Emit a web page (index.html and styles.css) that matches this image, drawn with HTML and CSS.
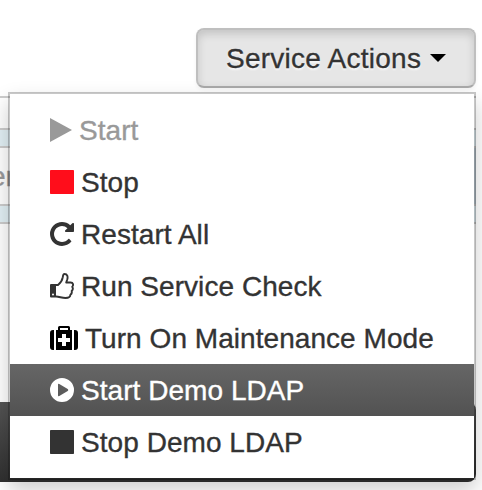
FILE: index.html
```html
<!DOCTYPE html>
<html lang="en">
<head>
<meta charset="utf-8">
<title>Service Actions</title>
<link rel="stylesheet" href="styles.css">
</head>
<body>
<header class="toolbar">
  <div class="dropdown">
    <button class="toggle" type="button"><span class="label">Service Actions</span><i class="caret"></i></button>
    <ul class="menu">
      <li class="item disabled"><svg class="icon play" viewBox="0 0 22 24"><path d="M0 0 22 12 0 24Z"/></svg><span>Start</span></li>
      <li class="item stop"><svg class="icon" viewBox="0 0 24 24"><rect width="24" height="24" rx=".7"/></svg><span>Stop</span></li>
      <li class="item"><svg class="icon" viewBox="0 128 1536 1536"><path d="M1536 256v448q0 26-19 45t-45 19h-448q-42 0-59-40-17-39 14-69l138-138q-148-137-349-137-104 0-198.500 40.500t-163.500 109.500-109.500 163.500-40.500 198.500 40.500 198.500 109.500 163.500 163.500 109.500 198.500 40.500q119 0 225-52t179-147q7-10 23-12 15 0 25 9l137 138q9 8 9.500 20.500t-7.500 22.500q-109 132-264 204.500t-327 72.500q-156 0-298-61t-245-164-164-245-61-298 61-298 164-245 245-164 298-61q147 0 284.500 55.500t244.500 156.500l130-129q29-31 70-14 39 17 39 59z"/></svg><span>Restart All</span></li>
      <li class="item"><svg class="icon thumb" viewBox="0 0 24 26"><path d="M1 11H6V24.500H1Q0 24.500 0 23.500V12Q0 11 1 11Z"/><circle cx="3" cy="21.500" r="1" fill="#fff"/><path d="M6 12H8C10.500 10 12.300 7.500 12.800 4.200 13 2 13.600 1 14.500 1 17.400 1 18 3.700 17.300 6.300L16.200 9.500H20.600C23.300 9.500 23.700 12.200 22.200 13.800 23.300 15.500 22.800 17 21.700 18 22.200 20 21.500 21 20.400 21.800 20.400 24.300 18.800 25 15.500 25 11.500 25 9.500 23.500 6 23.500" fill="none" stroke="currentColor" stroke-width="1.900" stroke-linejoin="round"/></svg><span>Run Service Check</span></li>
      <li class="item"><svg class="icon medkit" viewBox="0 0 28 24"><path d="M0 7Q0 4 3 4H4V24H3Q0 24 0 21ZM24 4H25Q28 4 28 7V21Q28 24 25 24H24ZM6 4H8V1.500Q8 0 9.500 0H18.500Q20 0 20 1.500V4H22V24H6ZM10 4H18V2H10ZM12 8V12H8V16H12V20H16V16H20V12H16V8Z" fill-rule="evenodd"/></svg><span>Turn On Maintenance Mode</span></li>
      <li class="item active"><svg class="icon" viewBox="0 0 24 24"><path d="M12 0A12 12 0 1 0 12 24 12 12 0 1 0 12 0ZM8 6.700Q8 5.300 9.300 6L17.700 11.100Q19 12 17.700 12.900L9.300 18Q8 18.700 8 17.300Z" fill-rule="evenodd"/></svg><span>Start Demo LDAP</span></li>
      <li class="item"><svg class="icon" viewBox="0 0 24 24"><rect width="24" height="24" rx=".7"/></svg><span>Stop Demo LDAP</span></li>
    </ul>
  </div>
</header>
<main class="panel">
  <div class="band"></div>
  <div class="field">er</div>
  <div class="band"></div>
</main>
<footer class="bar"></footer>
</body>
</html>
```
FILE: styles.css
```css
* { box-sizing: border-box; }
body {
  margin: 0;
  width: 482px;
  height: 490px;
  overflow: hidden;
  background: #fff;
  color: #333;
  font: 28px/52px "Liberation Sans", Arial, sans-serif;
  -webkit-text-stroke: .35px;
}
.toolbar {
  display: flex;
  justify-content: flex-end;
  height: 96px;
  padding: 28px 6px 0 0;
}
.dropdown { position: relative; width: 280px; height: 60px; }
.toggle {
  display: flex;
  align-items: center;
  gap: 9px;
  width: 100%;
  height: 60px;
  padding: 0 0 0 28px;
  border: 2px solid #bfbfbf;
  border-bottom-color: #a9a9a9;
  border-radius: 8px;
  background: #e6e6e6;
  box-shadow: inset 0 4px 8px rgba(0, 0, 0, .15), 0 2px 4px rgba(0, 0, 0, .05);
  color: #333;
  font: inherit;
  text-shadow: 0 2px 2px rgba(255, 255, 255, .75);
}
.label { padding-top: 2px; letter-spacing: .25px; }
.caret {
  border: 8px solid transparent;
  border-top-color: #000;
  border-bottom: 0;
}
.menu {
  position: absolute;
  z-index: 2;
  top: 64px;
  right: 0;
  width: 468px;
  height: 388px;
  margin: 0;
  padding: 10px 0;
  list-style: none;
  border: 2px solid rgba(0, 0, 0, .22);
  background: #fff;
  background-clip: padding-box;
  box-shadow: 0 10px 20px rgba(0, 0, 0, .2);
}
.item {
  display: flex;
  align-items: center;
  gap: 7px;
  height: 52px;
  padding-left: 40px;
  white-space: nowrap;
}
.item span { padding-top: 1px; letter-spacing: .05px; }
.icon { flex: none; width: 24px; height: 24px; fill: currentColor; }
.play { width: 22px; }
.thumb { height: 26px; }
.medkit { width: 28px; color: #000; }
.disabled { color: #999; }
.stop .icon { color: #ff0d1b; }
.active { color: #fff; background: linear-gradient(#666, #525252); }
.panel {
  width: 476px;
  height: 306px;
  padding-top: 30px;
  border-top: 2px solid #ccc;
  background: #fff;
}
.band {
  height: 20px;
  border: solid #ccc;
  border-width: 2px 0;
  background: #e2f0f5;
}
.field {
  height: 56px;
  margin-left: -10px;
  border-right: 2px solid #b8c5cd;
  background: #fff;
  color: #999;
  line-height: 58px;
}
.bar {
  width: 476px;
  height: 80px;
  border-radius: 0 8px 8px 0;
  background: linear-gradient(#555, #303030);
}
```
